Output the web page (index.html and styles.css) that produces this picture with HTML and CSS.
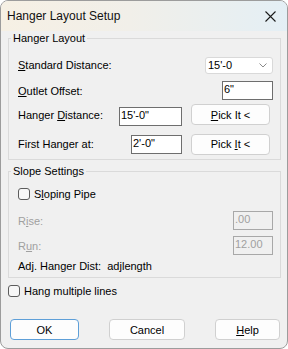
FILE: index.html
```html
<!DOCTYPE html>
<html>
<head>
<meta charset="utf-8">
<link rel="stylesheet" href="styles.css">
</head>
<body>
<div class="win">
  <div class="titlebar">
    <span class="title">Hanger Layout Setup</span>
    <svg class="close" width="11" height="11" viewBox="0 0 11 11"><path d="M0.5 0.5 L10.5 10.5 M10.5 0.5 L0.5 10.5" stroke="#1b1b1b" stroke-width="1.1" fill="none"/></svg>
  </div>
  <div class="body">
    <fieldset class="group g1">
      <legend>Hanger Layout</legend>
      <div class="row r1">
        <span class="lbl"><u>S</u>tandard Distance:</span>
        <span class="combo"><span>15'-0</span><svg width="8" height="5" viewBox="0 0 8 5"><path d="M0.5 0.5 L4 4 L7.5 0.5" stroke="#8a8a8a" fill="none" stroke-width="1"/></svg></span>
      </div>
      <div class="row r2">
        <span class="lbl"><u>O</u>utlet Offset:</span>
        <span class="edit w51">6"</span>
      </div>
      <div class="row r3">
        <span class="lbl">Hanger <u>D</u>istance:</span>
        <span class="edit w63 tall">15'-0"</span>
        <span class="btn pick"><span><u>P</u>ick It &lt;</span></span>
      </div>
      <div class="row r4">
        <span class="lbl">First Hanger at:</span>
        <span class="edit w51">2'-0"</span>
        <span class="btn pick"><span>Pick <u>I</u>t &lt;</span></span>
      </div>
    </fieldset>
    <fieldset class="group g2">
      <legend>Slope Settings</legend>
      <div class="row c1">
        <span class="check"></span>
        <span class="lbl">S<u>l</u>oping Pipe</span>
      </div>
      <div class="row c2">
        <span class="lbl dis">R<u>i</u>se:</span>
        <span class="edit w40 disabled">.00</span>
      </div>
      <div class="row c3">
        <span class="lbl dis">R<u>u</u>n:</span>
        <span class="edit w40 disabled">12.00</span>
      </div>
      <div class="row c4">
        <span class="lbl">Adj. Hanger Dist:&nbsp; adjlength</span>
      </div>
    </fieldset>
    <div class="row multi">
      <span class="check"></span>
      <span class="lbl">Hang multiple lines</span>
    </div>
    <div class="buttons">
      <span class="btn ok"><span>OK</span></span>
      <span class="btn cancel"><span>Cancel</span></span>
      <span class="btn help"><span><u>H</u>elp</span></span>
    </div>
  </div>
</div>
</body>
</html>
```
FILE: styles.css
```css
* { box-sizing: border-box; }
html, body { margin: 0; padding: 0; background: #ffffff; }
body { font-family: "Liberation Sans", Arial, sans-serif; font-size: 11px; color: #000; }
u { text-decoration: underline; text-underline-offset: 1px; }

.win {
  width: 288px; height: 349px;
  border: 1px solid #9c9c9c;
  border-radius: 8px;
  background: #f0f0f0;
  overflow: hidden;
}
.titlebar {
  height: 30px;
  display: flex; align-items: center; justify-content: space-between;
  padding: 0 11px 0 6px;
  background: linear-gradient(90deg, #f6f0e4 0%, #f1efe9 45%, #e4eff5 100%);
}
.title { font-size: 12px; color: #111; }
.close { display: block; }

.body { padding: 0 6px 0 7px; }

.group {
  margin: 0; padding: 0 7px 4px 9px;
  border: 1px solid #dadada;
  border-radius: 0;
  min-width: 0;
}
.group legend {
  padding: 0 2px; margin-left: -7px;
  line-height: 14px; height: 14px;
  color: #000;
}
.g2 { margin-top: 4px; }

.row { display: flex; align-items: center; }
.lbl { flex: 1; white-space: nowrap; }
.dis { color: #a0a0a0; }

.r1 { height: 18px; margin-top: 11px; }
.r2 { height: 19px; margin-top: 7px; }
.r3 { height: 22px; margin-top: 4px; }
.r4 { height: 22px; margin-top: 7px; }

.combo {
  width: 68px; height: 17px;
  background: #fff;
  border: 1px solid #d9d9d9;
  border-radius: 3px;
  display: flex; align-items: center; justify-content: space-between;
  padding: 0 5px 0 2px;
}
.combo svg { display: block; }

.edit {
  height: 19px;
  background: #fff;
  border: 1px solid #6e6e6e;
  padding: 0 1px;
  line-height: 15px;
  white-space: nowrap;
}
.w51 { width: 51px; }
.w63 { width: 63px; }
.w40 { width: 40px; }
.tall { align-self: flex-end; }
.edit.disabled { background: #f0f0f0; border-color: #a8a8a8; color: #a0a0a0; }

.btn {
  display: flex; align-items: center; justify-content: center;
  background: #fdfdfd;
  border: 1px solid #d0d0d0;
  border-radius: 4px;
  height: 21px;
  white-space: nowrap;
}
.pick { width: 79px; margin-left: 9px; margin-right: 3px; }
.r3 .pick { align-self: flex-start; }

.c1 { height: 16px; margin-top: 8px; }
.c2 { height: 19px; margin-top: 9px; }
.c3 { height: 19px; margin-top: 6px; }
.c4 { height: 14px; margin-top: 4px; }

.check {
  width: 12px; height: 12px;
  border: 1px solid #5c5c5c;
  border-radius: 3px;
  background: #f7f7f7;
  margin-right: 4px;
  flex: none;
}
.multi { height: 14px; margin-top: 6px; }

.buttons {
  display: flex; justify-content: space-between;
  margin-top: 21px; padding: 0 1px 0 2px;
}
.ok { width: 69px; border-color: #5e9fd8; }
.cancel { width: 76px; }
.help { width: 65px; }
```
